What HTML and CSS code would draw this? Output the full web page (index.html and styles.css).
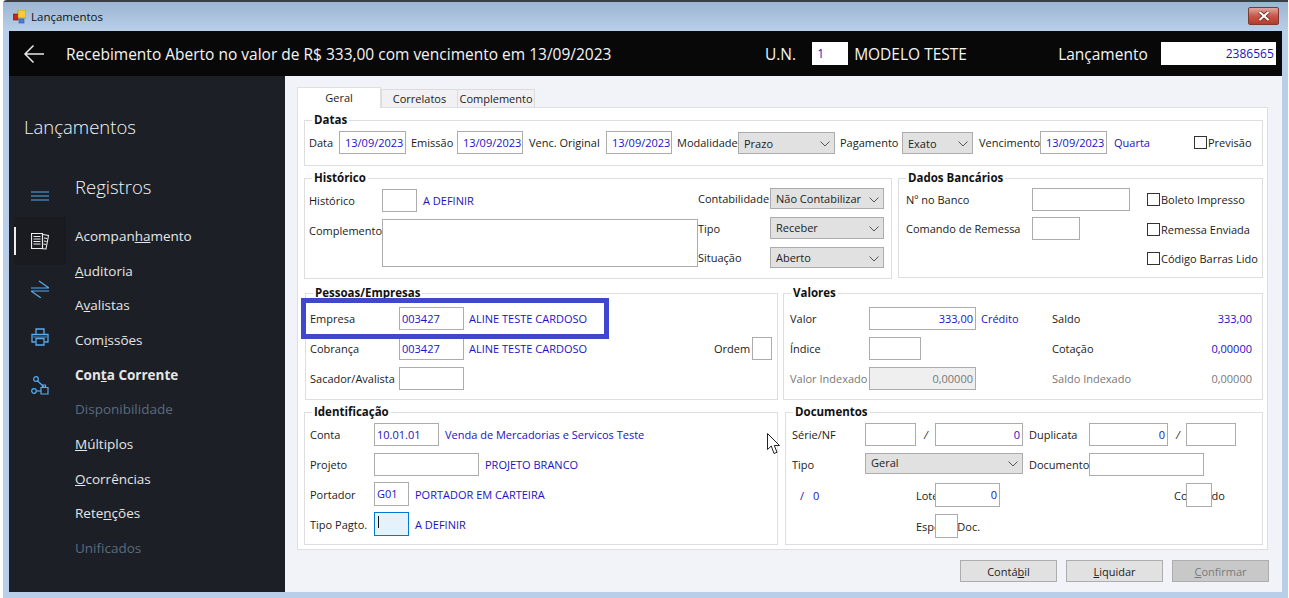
FILE: index.html
```html
<!DOCTYPE html>
<html lang="pt-BR">
<head>
<meta charset="utf-8">
<title>Lançamentos</title>
<link rel="stylesheet" href="styles.css">
</head>
<body>
<div class="window">
  <div class="titlebar">
    <svg class="app-icon" width="13" height="14" viewBox="0 0 13 14"><rect x="0" y="4" width="5" height="6" fill="#c8261c" stroke="#7a1d16" stroke-width=".6"/><rect x="5" y="0" width="8" height="8" fill="#f6cc3c" stroke="#a08020" stroke-width=".6"/><rect x="6" y="9" width="5" height="4" fill="#4a7fd8" stroke="#2c55a0" stroke-width=".6"/></svg>
    <span class="window-title">Lançamentos</span>
    <div class="close"><svg width="14" height="10" viewBox="0 0 14 10"><path d="M2.5 1 L11.5 9 M11.5 1 L2.5 9" stroke="#5a2018" stroke-width="3.6"/><path d="M2.5 1 L11.5 9 M11.5 1 L2.5 9" stroke="#fff" stroke-width="2.2"/></svg></div>
  </div>
  <header class="topbar">
    <svg class="back" width="22" height="20" viewBox="0 0 22 20"><path d="M21 10 H2 M10.500 1.500 L2 10 L10.500 18.500" fill="none" stroke="#e8e8e8" stroke-width="1.500"/></svg>
    <div class="headline">Recebimento Aberto no valor de R$ 333,00 com vencimento em 13/09/2023</div>
    <span class="un-label">U.N.</span>
    <div class="top-input un-input">1</div>
    <span class="un-name">MODELO TESTE</span>
    <span class="lanc-label">Lançamento</span>
    <div class="top-input lanc-input">2386565</div>
  </header>
  <div class="main">
    <aside class="sidebar">
      <div class="side-title">Lançamentos</div>
      <div class="side-body">
        <div class="rail">
          <div class="rail-btn menu-btn"><svg width="18" height="10" viewBox="0 0 18 10"><path d="M0 1 H18 M0 5 H18 M0 9 H18" stroke="#58acf0" stroke-width="1"/></svg></div>
          <div class="rail-btn is-active"><svg width="18" height="18" viewBox="0 0 18 18" fill="none" stroke="#ececec"><path d="M.5 1.500 H11.500 V16.500 H.5 Z" stroke-width="1.200"/><path d="M2.500 4.500 H9.500 M2.500 7 H9.500 M2.500 9.500 H9.500 M2.500 12 H9.500" stroke-width="1"/><path d="M12 2.500 L17.500 3.500 L15 17 L9 16.500 M13 6 L16 6.500 M13 9 L15.500 9.500 M12.500 12 L15 12.500" stroke-width="1.100"/></svg></div>
          <div class="rail-btn"><svg width="18" height="18" viewBox="0 0 18 18" fill="none" stroke="#58acf0"><path d="M0 8 H18 L8 1 M18 11 H0 L10 18" stroke-width="1.200"/></svg></div>
          <div class="rail-btn"><svg width="18" height="18" viewBox="0 0 18 18" fill="none" stroke="#58acf0" stroke-width="1.300"><path d="M5 6 V1 H13 V6"/><path d="M4.500 14 H1 V6.500 H17 V14 H13.500"/><path d="M5 10.500 H13 V17 H5 Z"/><path d="M2 9 H16" stroke-width=".8"/></svg></div>
          <div class="rail-btn"><svg width="18" height="19" viewBox="0 0 18 19" fill="none" stroke="#58acf0" stroke-width="1.200"><circle cx="5" cy="3" r="2.300"/><circle cx="3" cy="15" r="2.300"/><path d="M6.500 4.800 L13 11"/><path d="M5.500 15 H10"/><path d="M10 11.500 H17 V18 H10 Z"/><path d="M11.500 11 V9 H14.500 V11"/></svg></div>
        </div>
        <nav class="side-menu">
          <div class="side-heading">Registros</div>
          <a class="side-item">Acompan<u>ha</u>mento</a>
          <a class="side-item"><u>A</u>uditoria</a>
          <a class="side-item">A<u>v</u>alistas</a>
          <a class="side-item">Com<u>i</u>ssões</a>
          <a class="side-item is-bold">Con<u>t</u>a Corrente</a>
          <a class="side-item is-off">Disponibilidade</a>
          <a class="side-item"><u>M</u>últiplos</a>
          <a class="side-item"><u>O</u>corrências</a>
          <a class="side-item">Rete<u>n</u>ções</a>
          <a class="side-item is-off">Unificados</a>
        </nav>
      </div>
    </aside>
    <main class="content">
      <div class="tabs">
        <div class="tab tab-active">Geral</div>
        <div class="tab tab-correlatos">Correlatos</div>
        <div class="tab tab-complemento">Complemento</div>
      </div>
      <div class="panel">
        <section class="group g-datas">
          <div class="legend">Datas</div>
          <div class="datas-grid">
            <span>Data</span><div class="field">13/09/2023</div>
            <span class="lp5">Emissão</span><div class="field">13/09/2023</div>
            <span class="lp6">Venc. Original</span><div class="field">13/09/2023</div>
            <span class="lp5">Modalidade</span><div class="combo">Prazo<svg class="chev" width="10" height="6" viewBox="0 0 10 6"><path d="M.5 .5 L5 5 L9.500 .5" fill="none" stroke="#555"/></svg></div>
            <span class="lp5">Pagamento</span><div class="combo">Exato<svg class="chev" width="10" height="6" viewBox="0 0 10 6"><path d="M.5 .5 L5 5 L9.500 .5" fill="none" stroke="#555"/></svg></div>
            <span class="lp6">Vencimento</span><div class="field">13/09/2023</div>
            <span class="lp7 link">Quarta</span>
            <label class="check"><i class="box"></i>Previsão</label>
          </div>
        </section>
        <div class="group-row row-hist">
          <section class="group g-hist">
            <div class="legend">Histórico</div>
            <div class="hist-left">
              <span>Histórico</span><div class="field"></div><span class="lp6 link">A DEFINIR</span>
              <span class="top-label">Complemento</span><div class="field area"></div>
            </div>
            <div class="hist-right">
              <span>Contabilidade</span><div class="combo">Não Contabilizar<svg class="chev" width="10" height="6" viewBox="0 0 10 6"><path d="M.5 .5 L5 5 L9.500 .5" fill="none" stroke="#555"/></svg></div>
              <span>Tipo</span><div class="combo">Receber<svg class="chev" width="10" height="6" viewBox="0 0 10 6"><path d="M.5 .5 L5 5 L9.500 .5" fill="none" stroke="#555"/></svg></div>
              <span>Situação</span><div class="combo">Aberto<svg class="chev" width="10" height="6" viewBox="0 0 10 6"><path d="M.5 .5 L5 5 L9.500 .5" fill="none" stroke="#555"/></svg></div>
            </div>
          </section>
          <section class="group g-banco">
            <div class="legend">Dados Bancários</div>
            <div class="banco-left">
              <span>Nº no Banco</span><div class="field banco-num"></div>
              <span>Comando de Remessa</span><div class="field banco-cmd"></div>
            </div>
            <div class="banco-right">
              <label class="check"><i class="box"></i>Boleto Impresso</label>
              <label class="check"><i class="box"></i>Remessa Enviada</label>
              <label class="check"><i class="box"></i>Código Barras Lido</label>
            </div>
          </section>
        </div>
        <div class="group-row row-pessoas">
          <section class="group g-pessoas">
            <div class="legend">Pessoas/Empresas</div>
            <div class="pessoas-grid">
              <span>Empresa</span><div class="field tight">003427</div><span class="lp5 link">ALINE TESTE CARDOSO</span><span></span><span></span>
              <span>Cobrança</span><div class="field tight">003427</div><span class="lp5 link">ALINE TESTE CARDOSO</span><span>Ordem</span><div class="field"></div>
              <span>Sacador/Avalista</span><div class="field"></div>
            </div>
            <div class="highlight"></div>
          </section>
          <section class="group g-valores">
            <div class="legend">Valores</div>
            <div class="valores-grid">
              <span>Valor</span><div class="field right">333,00</div><span class="lp5 link">Crédito</span><span>Saldo</span><span class="link right-text">333,00</span>
              <span>Índice</span><div class="field indice"></div><span></span><span>Cotação</span><span class="link right-text">0,00000</span>
              <span class="muted">Valor Indexado</span><div class="field right disabled">0,00000</div><span></span><span class="muted">Saldo Indexado</span><span class="muted right-text">0,00000</span>
            </div>
          </section>
        </div>
        <div class="group-row row-ident">
          <section class="group g-ident">
            <div class="legend">Identificação</div>
            <div class="ident-row"><span class="ident-label">Conta</span><div class="field f65 tight">10.01.01</div><span class="link">Venda de Mercadorias e Servicos Teste</span></div>
            <div class="ident-row"><span class="ident-label">Projeto</span><div class="field f105"></div><span class="link">PROJETO BRANCO</span></div>
            <div class="ident-row tall"><span class="ident-label">Portador</span><div class="field f35 tight">G01</div><span class="link">PORTADOR EM CARTEIRA</span></div>
            <div class="ident-row tall"><span class="ident-label">Tipo Pagto.</span><div class="field f35 focus"><i class="caret"></i></div><span class="link">A DEFINIR</span></div>
            <svg class="pointer" width="14" height="22" viewBox="0 0 14 22"><path d="M.5 .5 V16.500 L4.300 13 L7 20.500 L10 19.300 L7.300 12.500 L12.500 12.500 Z" fill="#fff" stroke="#222"/></svg>
          </section>
          <section class="group g-docs">
            <div class="legend">Documentos</div>
            <div class="docs-grid">
              <span>Série/NF</span><div class="field"></div><span class="slash">/</span><div class="field right">0</div><span class="lp6">Duplicata</span><div class="field right">0</div><span class="slash">/</span><div class="field"></div>
              <span>Tipo</span><div class="combo span3 combo-tipo">Geral<svg class="chev" width="10" height="6" viewBox="0 0 10 6"><path d="M.5 .5 L5 5 L9.500 .5" fill="none" stroke="#555"/></svg></div><span class="lp6">Documento</span><div class="field span-doc"></div><span class="doc-tail link">/<b>0</b></span>
              <span>Lote</span><div class="field right span3 f65">0</div><span class="lp6">Conferido</span><div class="field f26"></div><span class="span2"></span>
              <span>Espécie Doc.</span><div class="field span3 f23"></div>
            </div>
          </section>
        </div>
      </div>
      <footer class="actions">
        <button class="btn" type="button">Contá<u>b</u>il</button>
        <button class="btn" type="button"><u>L</u>iquidar</button>
        <button class="btn btn-off" type="button"><u>C</u>onfirmar</button>
      </footer>
    </main>
  </div>
</div>
</body>
</html>
```
FILE: styles.css
```css
* { box-sizing: border-box; }
html, body { margin: 0; height: 100%; background: #fff; overflow: hidden; }
body { font-family: "Open Sans", "Noto Sans", sans-serif; font-size: 11px; color: #1a1a1a; }

.window {
  margin-left: 3px;
  width: 1285px;
  height: 598px;
  display: flex;
  flex-direction: column;
  padding: 0 6px 6px;
  background: #b9cfe9;
  border-top: 2px solid #3a3f45;
  border-top-left-radius: 4px;
}
.titlebar {
  height: 29px;
  margin: 0 -6px;
  padding: 0 9px 0 10px;
  display: flex;
  align-items: center;
  background: linear-gradient(#9cb5d2, #b8cfe9);
}
.app-icon { flex: none; margin-top: 1px; }
.window-title { margin-left: 5px; font-size: 11.500px; color: #111; }
.close {
  margin-left: auto;
  width: 31px;
  height: 18px;
  margin-top: -2px;
  display: flex;
  align-items: center;
  justify-content: center;
  background: linear-gradient(#e0a79e, #c8584a 50%, #b53b2d);
  border: 1px solid #7d3a32;
  border-radius: 2px;
}

.topbar {
  height: 45px;
  flex: none;
  display: flex;
  align-items: center;
  background: #080808;
  color: #f4f4f4;
  font-size: 15.500px;
}
.back { margin-left: 14px; flex: none; }
.headline { margin-left: 21px; width: 699px; white-space: nowrap; }
.top-input { background: #fff; height: 23px; color: #1a12c4; font-size: 12px; line-height: 23px; }
.un-input { width: 36px; margin-left: 16px; padding-left: 5px; }
.un-name { margin-left: 6px; width: 204px; }
.lanc-input { width: 115px; margin-left: 13px; text-align: right; padding-right: 2px; }
.un-label, .lanc-label { white-space: nowrap; }

.main { flex: 1; display: flex; min-height: 0; }
.sidebar { width: 276px; flex: none; background: #1c1f25; color: #eee; }
.side-title { padding: 37px 0 0 15px; font-size: 18.500px; line-height: 28px; font-weight: 300; color: #f2f6fa; }
.side-body { display: flex; }
.rail { width: 66px; flex: none; padding: 32px 0 0 5px; }
.rail-btn { width: 52px; height: 48px; padding-left: 15px; display: flex; align-items: center; border-left: 2px solid transparent; }
.menu-btn { height: 44px; padding-top: 2px; }
.is-active { background: #191b20; position: relative; }
.is-active::before { content: ""; position: absolute; left: -2px; top: 10px; width: 2px; height: 28px; background: #eee; }
.side-menu { flex: 1; padding-top: 32px; }
.side-heading { font-size: 18.500px; line-height: 28px; font-weight: 300; color: #f2f6fa; height: 45.500px; }
.side-item { display: flex; height: 34.700px; align-items: center; font-size: 13.500px; color: #e6e6e6; white-space: pre; }
.side-item.is-bold { font-weight: 700; }
.side-item.is-off { color: #5b6b7d; }

.content { flex: 1; display: flex; flex-direction: column; padding: 11px 14px 0 12px; background: #f1f3f8; min-width: 0; }
.tabs { height: 20px; flex: none; display: flex; align-items: flex-end; position: relative; z-index: 1; }
.tab { height: 18px; margin-bottom: 0; display: flex; align-items: center; justify-content: center; border: 1px solid #dcdcdc; border-bottom: 0; background: #f1f1f3; }
.tab-active { width: 84px; height: 21px; margin-bottom: -1px; background: #fff; border-color: #e0e0e0; padding-bottom: 2px; }
.tab-correlatos { width: 77px; }
.tab-complemento { width: 77px; border-left: 0; }
.panel { height: 443px; flex: none; padding: 12px 0 0 6px; background: #fff; border: 1px solid #dfdfdf; }

.group { position: relative; border: 1px solid #dedede; background: #fff; }
.legend { position: absolute; left: 7px; top: -8px; padding: 0 2px; background: #fff; font-weight: 700; font-size: 11.500px; line-height: 14px; color: #111; white-space: nowrap; }
.group-row { display: flex; }
.g-datas { width: 959px; height: 46px; padding: 10px 0 0 4px; margin-bottom: 12px; }
.row-hist { gap: 6px; margin-bottom: 14px; }
.row-pessoas { gap: 5px; margin: 0 0 12px 1px; }
.row-ident { gap: 7px; }

.field, .combo { height: 23px; line-height: 21px; border: 1px solid #acacac; background: #fff; white-space: nowrap; }
.field { padding: 0 5px; color: #1a12c4; }
.field.tight { padding: 0 2px 0 2px; }
.field.right { text-align: right; padding-right: 2px; }
.combo { height: 22px; padding-left: 5px; position: relative; background: #e1e1e1; color: #222; }
.chev { position: absolute; right: 4px; top: 8px; }
.area { height: 48px; grid-column: span 2; }
.link { color: #1a12c4; }
.muted { color: #777; }
.disabled { background: #efefef; color: #777; }
.right-text { text-align: right; }
.lp5 { padding-left: 5px; }
.lp6 { padding-left: 6px; }
.lp7 { padding-left: 7px; }
span { white-space: nowrap; }

.check { display: flex; align-items: center; white-space: nowrap; }
.box { flex: none; width: 13px; height: 13px; margin-right: 1px; border: 1px solid #333; background: #fff; }

.datas-grid {
  display: grid;
  grid-template-columns: 30px 67px 51px 66px 83px 66px 66px 97px 67px 71px 67px 67px 87px 64px;
  align-items: center;
  height: 23px;
}

.g-hist { width: 588px; height: 101px; display: flex; padding-left: 4px; }
.hist-left { width: 389px; padding-top: 10px; display: grid; grid-template-columns: 73px 35px 1fr; grid-template-rows: 23px 48px; row-gap: 7px; align-items: center; align-content: start; }
.top-label { align-self: start; padding-top: 4px; }
.hist-right { padding-top: 9px; display: grid; grid-template-columns: 72px 114px; grid-template-rows: 21px 22px 21px; row-gap: 8px; align-items: center; align-content: start; }
.hist-right .combo { height: 100%; line-height: 19px; }

.g-banco { width: 365px; height: 100px; display: flex; padding-left: 7px; }
.banco-left { width: 241px; padding-top: 9px; display: grid; grid-template-columns: 126px 1fr; grid-template-rows: 23px 23px; row-gap: 6px; align-items: center; align-content: start; }
.banco-num { width: 98px; }
.banco-cmd { width: 48px; }
.banco-right { padding-top: 6px; }
.banco-right .check { height: 29.500px; }

.g-pessoas { width: 473px; height: 107px; padding: 13px 0 0 4px; }
.pessoas-grid { display: grid; grid-template-columns: 89px 65px 250px 38px 20px; grid-auto-rows: 23px; row-gap: 7px; align-items: center; }
.highlight { position: absolute; left: -5px; top: 4px; width: 308px; height: 41px; border: 5px solid #3f48cc; }

.g-valores { width: 480px; height: 107px; padding: 13px 0 0 6px; }
.valores-grid { display: grid; grid-template-columns: 79px 107px 76px 70px 130px; grid-auto-rows: 23px; row-gap: 7px; align-items: center; }
.indice { width: 52px; }

.g-ident { width: 474px; height: 133px; padding: 10px 0 0 5px; }
.ident-row { display: flex; align-items: center; height: 23px; margin-bottom: 7px; }
.ident-row.tall { height: 24px; margin-top: -1px; }
.ident-row.tall .field { height: 24px; }
.ident-label { width: 64px; flex: none; }
.ident-row .link { margin-left: 6px; }
.f65 { width: 65px; }
.f105 { width: 105px; }
.f35 { width: 35px; }
.f26 { width: 26px; }
.f23 { width: 23px; }
.focus { background: #e5f1fb; border-color: #0078d7; padding: 3px 0 0 3px; }
.caret { display: block; width: 1px; height: 12px; background: #111; }
.pointer { position: absolute; left: 462px; top: 20px; }

.g-docs { width: 478px; height: 133px; padding: 10px 0 0 6px; }
.docs-grid { display: grid; grid-template-columns: 73px 51px 19px 88px 66px 79px 18px 50px; grid-template-rows: 23px 23px 24px 24px; row-gap: 7px; align-items: center; }
.docs-grid .f65, .docs-grid .f26, .docs-grid .f23 { height: 24px; }
.span3 { grid-column: span 3; }
.span2 { grid-column: span 2; }
.combo-tipo { align-self: start; height: 21px; line-height: 18px; }
.combo-tipo .chev { top: 7px; }
.slash { padding-left: 8px; color: #333; font-style: italic; }
.span-doc { grid-column: span 2; width: 115px; }
.doc-tail { margin-left: 8px; grid-column: span 2; }
.doc-tail b { font-weight: 400; margin-left: 9px; }
.docs-grid .f65 { width: 65px; }
.docs-grid .f26 { width: 26px; }
.docs-grid .f23 { width: 23px; }

.actions { margin: 10px -1px 0 0; display: flex; justify-content: flex-end; gap: 9px; }
.btn { width: 97px; height: 22px; padding: 0; font: inherit; color: #222; background: #e1e1e1; border: 1px solid #adadad; }
.btn-off { background: #c8c8c8; color: #7a7a7a; }
```
